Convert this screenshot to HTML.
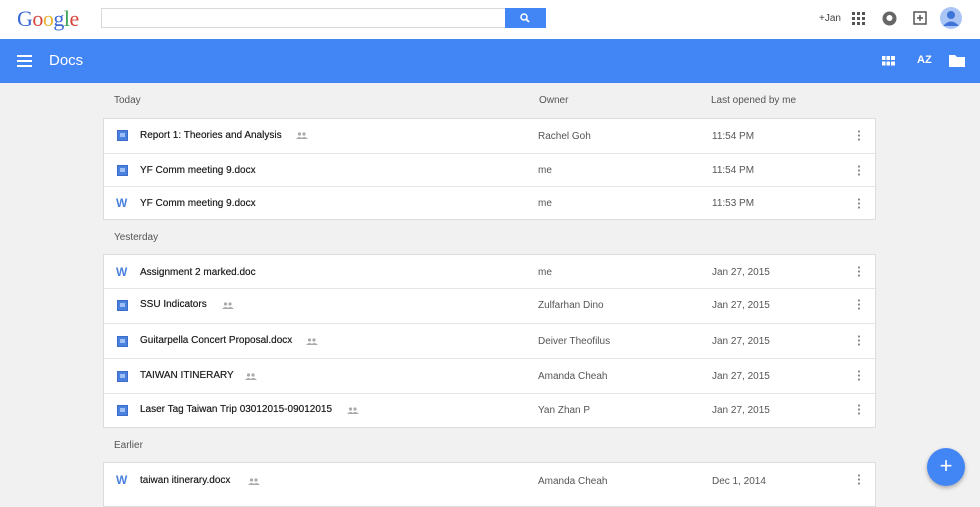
<!DOCTYPE html>
<html><head><meta charset="utf-8"><style>
*{margin:0;padding:0;box-sizing:border-box}
body{width:980px;height:501px;overflow:hidden;background:#f1f1f1;font-family:"Liberation Sans",Arial,sans-serif;position:relative}
.top{position:absolute;left:0;top:0;width:980px;height:39px;background:#fff}
.logo{position:absolute;left:17px;top:6px;font-family:"Liberation Serif",serif;font-size:22px;letter-spacing:-0.5px}
.search{position:absolute;left:101px;top:8px;width:405px;height:20px;border:1px solid #d9d9d9;background:#fff}
.sbtn{position:absolute;left:505px;top:8px;width:41px;height:20px;background:#4285f4}
.bar{position:absolute;left:0;top:39px;width:980px;height:44px;background:#4285f4}
.bar .t{position:absolute;left:49px;top:13px;color:#fff;font-size:15px}
.lbl{position:absolute;font-size:10px;color:#555}
.card{position:absolute;left:103px;width:773px;background:#fff;border:1px solid #dcdcdc}
.row{position:relative;border-top:1px solid #e6e6e6;font-size:10px;color:#333}
.row:first-child{border-top:none}
.row .n{position:absolute;left:36px;color:#222;text-shadow:0 0 0.4px #222}
.row .o{position:absolute;left:434px;color:#555}
.row .d{position:absolute;left:608px;color:#555}
.row svg.m{position:absolute;left:753px}
.ic{position:absolute;left:13px;width:11px;height:11px;background:#4a80e0;border:1px solid #3b6cc8}
.ic::after{content:"";position:absolute;left:2px;top:2px;width:5px;height:4px;background:#9ec0f5}
.w{position:absolute;left:12px;color:#4a80e0;font-weight:bold;font-size:12px}
.sh{position:absolute}
</style></head><body>
<svg width="0" height="0" style="position:absolute"><defs>
<g id="sh"><circle cx="3.5" cy="2" r="1.6" fill="#aaa"/><circle cx="8" cy="2" r="1.6" fill="#aaa"/><path d="M0 7q3.5-4 7 0zM5 7q3-4 7 0z" fill="#aaa"/></g>
<g id="dots"><circle cx="2" cy="1.5" r="1.1" fill="#888"/><circle cx="2" cy="5.5" r="1.1" fill="#888"/><circle cx="2" cy="9.5" r="1.1" fill="#888"/></g>
</defs></svg>
<div class="top">
<div class="logo"><span style="color:#3b6ad4">G</span><span style="color:#d6443a">o</span><span style="color:#e8b32e">o</span><span style="color:#3b6ad4">g</span><span style="color:#3ba353">l</span><span style="color:#d6443a">e</span></div>
<div class="search"></div>
<div class="sbtn"><svg width="41" height="20"><circle cx="19" cy="9" r="3" stroke="#fff" stroke-width="1.5" fill="none"/><path d="M21 11l3 3" stroke="#fff" stroke-width="1.8"/></svg></div>
<div style="position:absolute;left:819px;top:13px;font-size:10px;color:#444">+Jan</div>
<svg style="position:absolute;left:852px;top:12px" width="13" height="13" fill="#555"><rect x="0" y="0" width="3" height="3"/><rect x="5" y="0" width="3" height="3"/><rect x="10" y="0" width="3" height="3"/><rect x="0" y="5" width="3" height="3"/><rect x="5" y="5" width="3" height="3"/><rect x="10" y="5" width="3" height="3"/><rect x="0" y="10" width="3" height="3"/><rect x="5" y="10" width="3" height="3"/><rect x="10" y="10" width="3" height="3"/></svg>
<svg style="position:absolute;left:882px;top:11px" width="15" height="15"><circle cx="7.5" cy="7.5" r="7" fill="#666"/><circle cx="7.5" cy="7" r="3" fill="#fff"/></svg>
<svg style="position:absolute;left:913px;top:11px" width="15" height="15"><rect x="1" y="1" width="12" height="12" fill="none" stroke="#555" stroke-width="1.5"/><path d="M7 4v6M4 7h6" stroke="#555" stroke-width="1.5"/></svg>
<svg style="position:absolute;left:940px;top:7px" width="22" height="22"><circle cx="11" cy="11" r="11" fill="#a9c4f5"/><circle cx="11" cy="8" r="4" fill="#3f74d8"/><path d="M3 19q8-9 16 0" fill="#3f74d8"/></svg>
</div>
<div class="bar">
<svg style="position:absolute;left:17px;top:16px" width="15" height="12" fill="#fff"><rect y="0" width="15" height="2"/><rect y="5" width="15" height="2"/><rect y="10" width="15" height="2"/></svg>
<div class="t">Docs</div>
<svg style="position:absolute;left:882px;top:17px" width="13" height="10" fill="#fff"><rect x="0" y="0" width="3.5" height="4"/><rect x="4.5" y="0" width="3.5" height="4"/><rect x="9" y="0" width="4" height="4"/><rect x="0" y="5.5" width="3.5" height="4"/><rect x="4.5" y="5.5" width="3.5" height="4"/><rect x="9" y="5.5" width="4" height="4"/></svg>
<div style="position:absolute;left:917px;top:15px;color:#fff;font-size:11px;font-weight:bold">AZ</div>
<svg style="position:absolute;left:949px;top:15px" width="16" height="13"><path d="M0 1h6l2 2h8v10H0z" fill="#fff"/></svg>
</div>
<div class="lbl" style="left:114px;top:95px">Today</div>
<div class="lbl" style="left:539px;top:95px">Owner</div>
<div class="lbl" style="left:711px;top:95px">Last opened by me</div>
<div class="card" style="top:118px">
<div class="row" style="height:34px"><div class="ic" style="top:11px"></div><div class="n" style="top:11px">Report 1: Theories and Analysis</div><svg class="sh" style="left:192px;top:13px" width="12" height="8"><use href="#sh"/></svg><div class="o" style="top:12px">Rachel Goh</div><div class="d" style="top:12px">11:54 PM</div><svg class="m" style="top:11px" width="4" height="11"><use href="#dots"/></svg></div>
<div class="row" style="height:33px"><div class="ic" style="top:11px"></div><div class="n" style="top:11px">YF Comm meeting 9.docx</div><div class="o" style="top:11px">me</div><div class="d" style="top:11px">11:54 PM</div><svg class="m" style="top:11px" width="4" height="11"><use href="#dots"/></svg></div>
<div class="row" style="height:33px"><div class="w" style="top:9px">W</div><div class="n" style="top:11px">YF Comm meeting 9.docx</div><div class="o" style="top:11px">me</div><div class="d" style="top:11px">11:53 PM</div><svg class="m" style="top:11px" width="4" height="11"><use href="#dots"/></svg></div>
</div>
<div class="lbl" style="left:114px;top:232px">Yesterday</div>
<div class="card" style="top:254px">
<div class="row" style="height:33px"><div class="w" style="top:10px">W</div><div class="n" style="top:12px">Assignment 2 marked.doc</div><div class="o" style="top:12px">me</div><div class="d" style="top:12px">Jan 27, 2015</div><svg class="m" style="top:11px" width="4" height="11"><use href="#dots"/></svg></div>
<div class="row" style="height:35px"><div class="ic" style="top:11px"></div><div class="n" style="top:10px">SSU Indicators</div><svg class="sh" style="left:118px;top:13px" width="12" height="8"><use href="#sh"/></svg><div class="o" style="top:11px">Zulfarhan Dino</div><div class="d" style="top:11px">Jan 27, 2015</div><svg class="m" style="top:10px" width="4" height="11"><use href="#dots"/></svg></div>
<div class="row" style="height:35px"><div class="ic" style="top:12px"></div><div class="n" style="top:11px">Guitarpella Concert Proposal.docx</div><svg class="sh" style="left:202px;top:14px" width="12" height="8"><use href="#sh"/></svg><div class="o" style="top:12px">Deiver Theofilus</div><div class="d" style="top:12px">Jan 27, 2015</div><svg class="m" style="top:11px" width="4" height="11"><use href="#dots"/></svg></div>
<div class="row" style="height:35px"><div class="ic" style="top:12px"></div><div class="n" style="top:11px">TAIWAN ITINERARY</div><svg class="sh" style="left:141px;top:14px" width="12" height="8"><use href="#sh"/></svg><div class="o" style="top:12px">Amanda Cheah</div><div class="d" style="top:12px">Jan 27, 2015</div><svg class="m" style="top:11px" width="4" height="11"><use href="#dots"/></svg></div>
<div class="row" style="height:34px"><div class="ic" style="top:11px"></div><div class="n" style="top:10px">Laser Tag Taiwan Trip 03012015-09012015</div><svg class="sh" style="left:243px;top:13px" width="12" height="8"><use href="#sh"/></svg><div class="o" style="top:11px">Yan Zhan P</div><div class="d" style="top:11px">Jan 27, 2015</div><svg class="m" style="top:10px" width="4" height="11"><use href="#dots"/></svg></div>
</div>
<div class="lbl" style="left:114px;top:440px">Earlier</div>
<div class="card" style="top:462px;height:45px">
<div class="row" style="height:35px"><div class="w" style="top:10px">W</div><div class="n" style="top:12px">taiwan itinerary.docx</div><svg class="sh" style="left:144px;top:15px" width="12" height="8"><use href="#sh"/></svg><div class="o" style="top:13px">Amanda Cheah</div><div class="d" style="top:13px">Dec 1, 2014</div><svg class="m" style="top:11px" width="4" height="11"><use href="#dots"/></svg></div>
</div>
<div style="position:absolute;left:927px;top:448px;width:38px;height:38px;border-radius:50%;background:#4285f4;box-shadow:0 2px 4px rgba(0,0,0,.3);color:#fff;font-size:22px;text-align:center;line-height:36px">+</div>
</body></html>
